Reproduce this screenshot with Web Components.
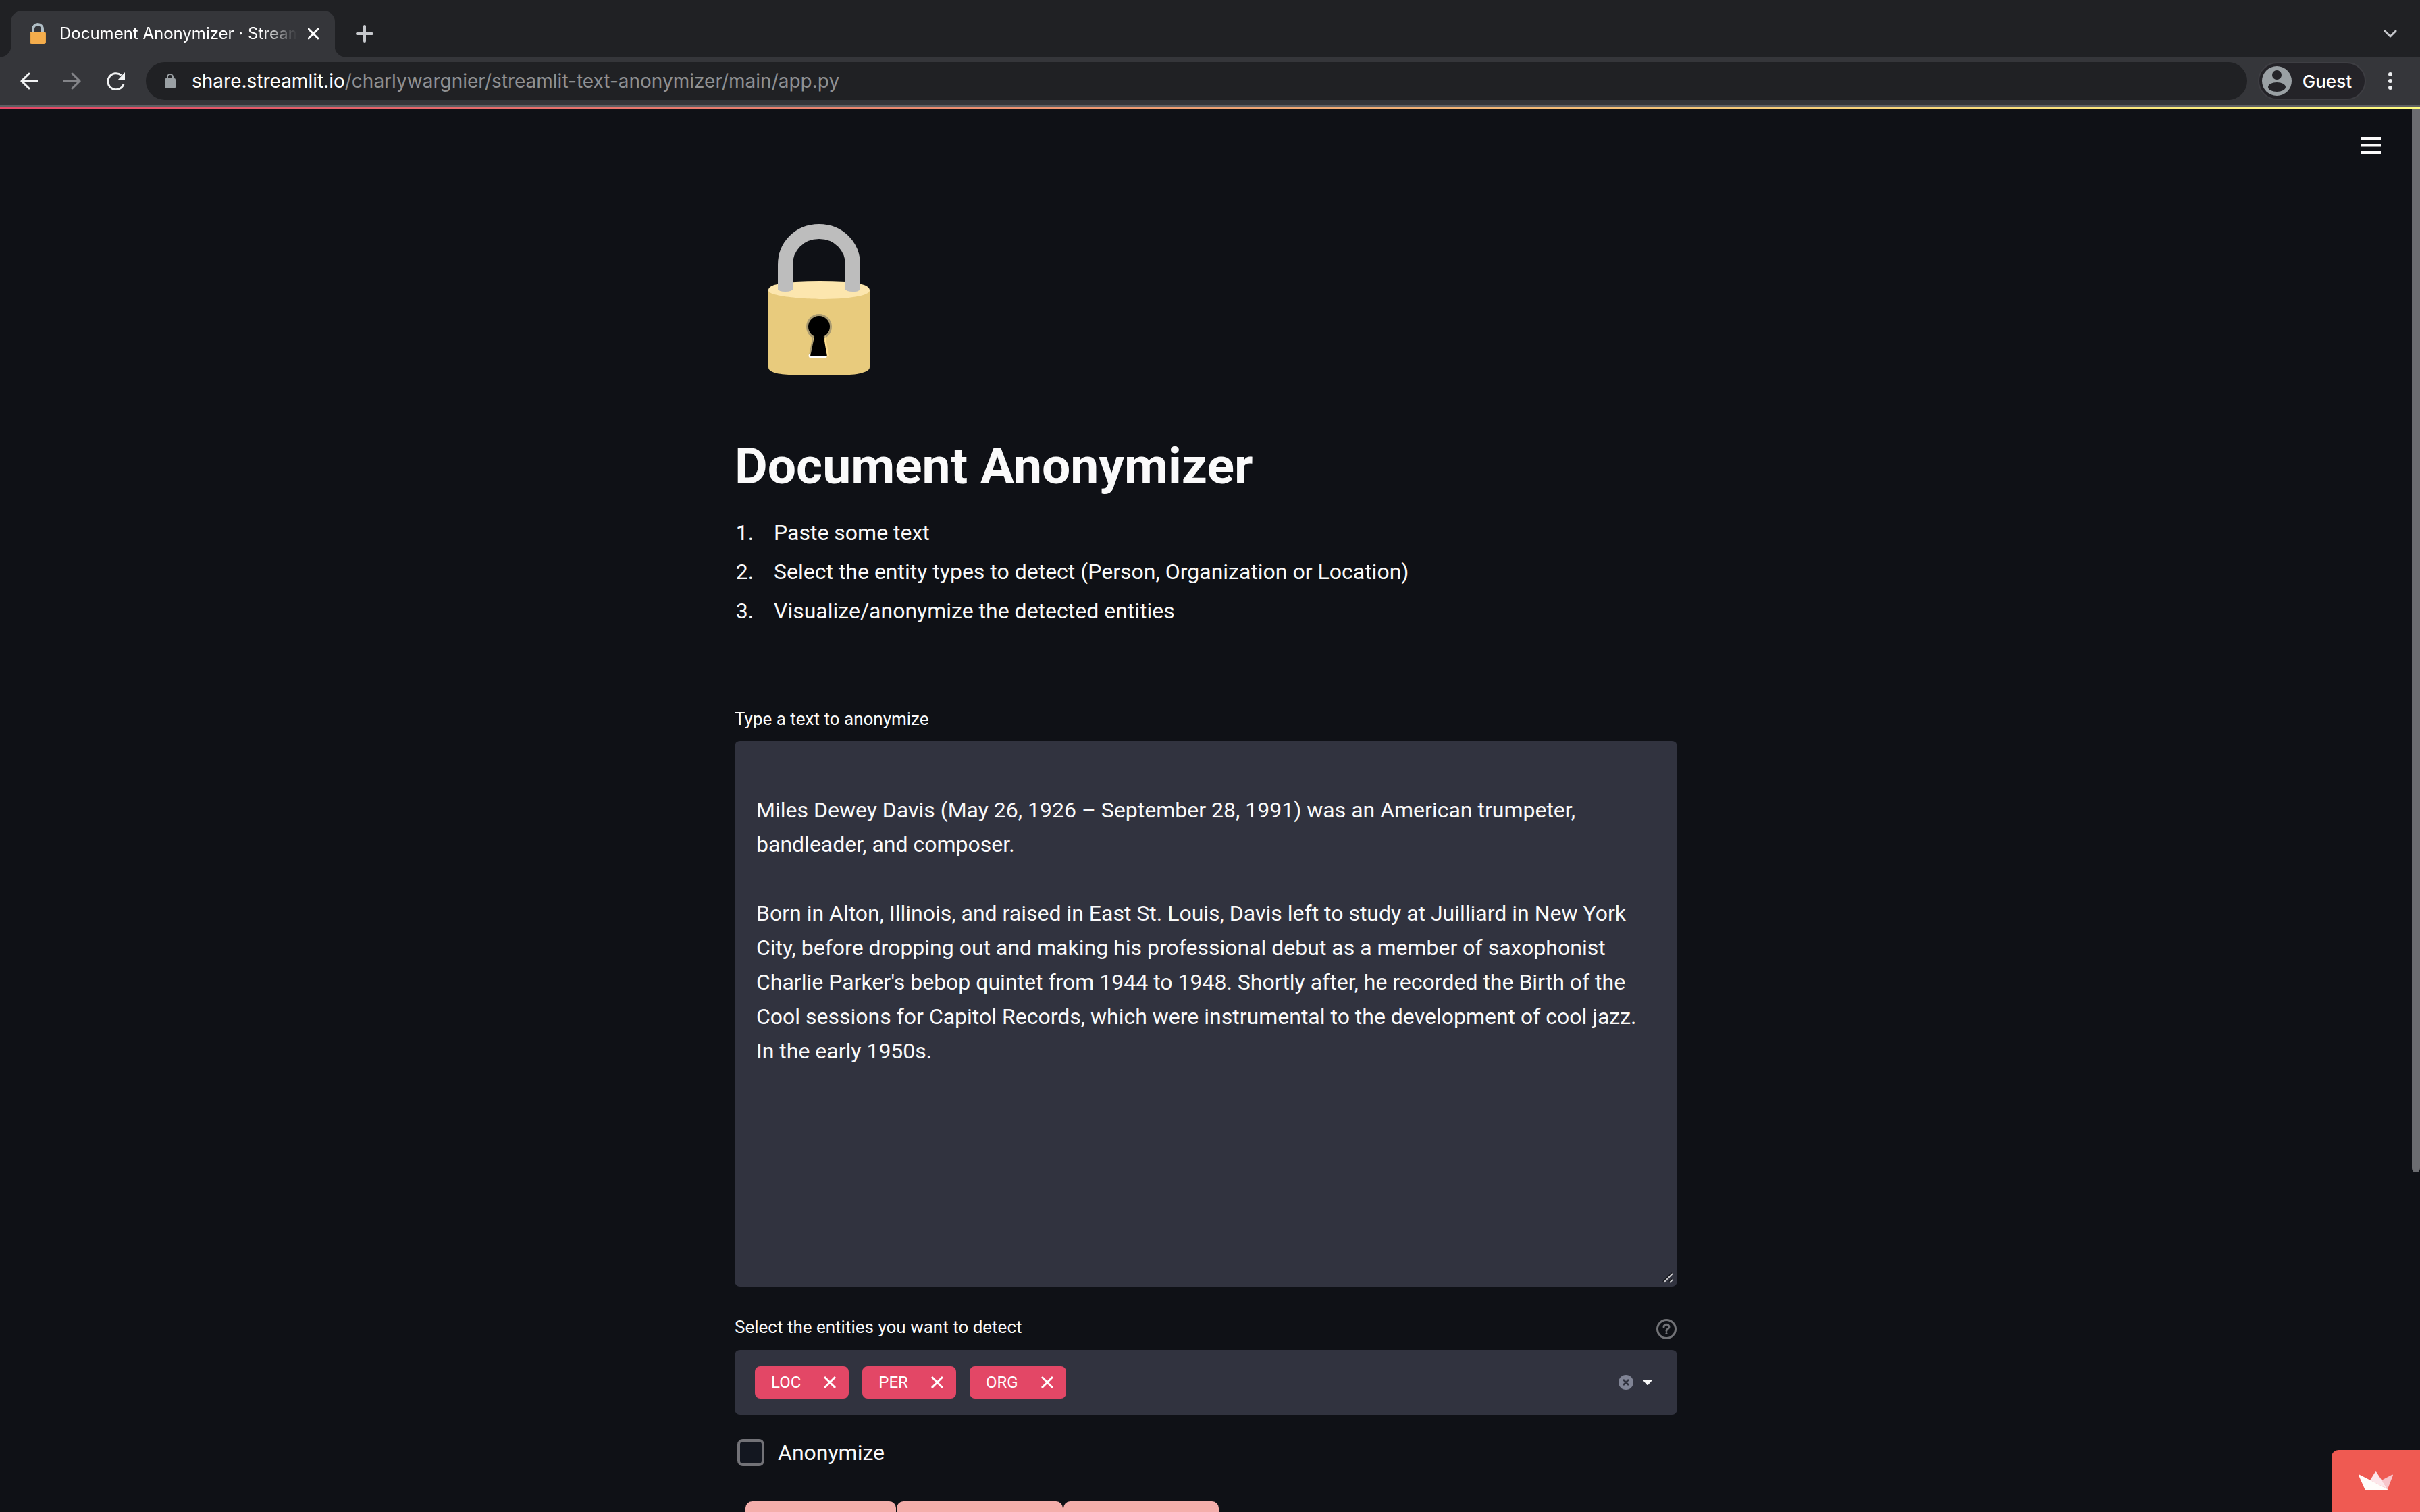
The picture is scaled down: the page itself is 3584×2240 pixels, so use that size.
<!DOCTYPE html>
<html lang="en">
<head>
<meta charset="utf-8">
<title>Document Anonymizer · Streamlit</title>
<style>
  html, body { margin: 0; height: 100%; overflow: hidden; background: #0f1116; }
</style>
</head>
<body>
<browser-window>
  <browser-tab slot="tabs">Document Anonymizer · Streamlit</browser-tab>
  <address-bar slot="address" domain="share.streamlit.io" path="/charlywargnier/streamlit-text-anonymizer/main/app.py"></address-bar>
  <streamlit-app>
    <lock-art></lock-art>
    <page-intro heading="Document Anonymizer">
      <li>Paste some text</li>
      <li>Select the entity types to detect (Person, Organization or Location)</li>
      <li>Visualize/anonymize the detected entities</li>
    </page-intro>
    <text-field label="Type a text to anonymize">
Miles Dewey Davis (May 26, 1926 – September 28, 1991) was an American trumpeter, bandleader, and composer.

Born in Alton, Illinois, and raised in East St. Louis, Davis left to study at Juilliard in New York City, before dropping out and making his professional debut as a member of saxophonist Charlie Parker's bebop quintet from 1944 to 1948. Shortly after, he recorded the Birth of the Cool sessions for Capitol Records, which were instrumental to the development of cool jazz. In the early 1950s.</text-field>
    <multi-select label="Select the entities you want to detect">
      <entity-tag>LOC</entity-tag>
      <entity-tag>PER</entity-tag>
      <entity-tag>ORG</entity-tag>
    </multi-select>
    <check-field label="Anonymize"></check-field>
    <result-strip></result-strip>
  </streamlit-app>
</browser-window>

<script>
const RESET = `
  * { box-sizing: border-box; }
  svg { display: block; flex: none; }
  button { margin: 0; padding: 0; border: 0; background: none; color: inherit; font: inherit; display: block; flex: none; }
`;

function define(name, render, ready) {
  customElements.define(name, class extends HTMLElement {
    connectedCallback() {
      if (this.shadowRoot) return;
      const root = this.attachShadow({ mode: "open" });
      const template = document.createElement("template");
      template.innerHTML = `<style>${RESET}</style>` + render(this);
      root.append(template.content.cloneNode(true));
      if (ready) ready(this, root);
    }
  });
}

define("browser-window", () => `
<style>
  :host { display: flex; flex-direction: column; height: 100vh; color: #fff; font-family: Inter, "Liberation Sans", sans-serif; background: #202124; }
  .tabs { display: flex; align-items: center; height: 84px; flex: none; padding: 16px 0 0 16px; }
  .new { margin-left: 31px; }
  .more { margin-left: auto; margin-right: 34px; }
  .bar { display: flex; align-items: center; height: 74px; flex: none; padding: 0 36px 0 29px; background: #35363a; border-bottom: 2px solid #5d5e62; }
  .nav { display: flex; gap: 36px; margin-right: 29px; }
  ::slotted(address-bar) { flex: 1; }
  .guest { display: flex; align-items: center; gap: 16px; height: 56px; margin: 0 28px 0 16px; padding: 0 19px 0 4px; border: 2px solid #3e3e43; border-radius: 28px; background: #242328; font-size: 26px; font-weight: 500; }
  .page { flex: 1; min-height: 0; display: flex; }
  ::slotted(streamlit-app) { flex: 1; }
</style>
<div class="tabs">
  <slot name="tabs"></slot>
  <button class="new" aria-label="New tab"><svg width="26" height="26" viewBox="0 0 26 26"><path d="M13 2v22M2 13h22" stroke="#c6c8cc" stroke-width="4" stroke-linecap="round"/></svg></button>
  <button class="more" aria-label="Search tabs"><svg width="20" height="14" viewBox="0 0 20 14"><path d="M2 3l8 8 8-8" fill="none" stroke="#c6c8cc" stroke-width="3" stroke-linecap="round" stroke-linejoin="round"/></svg></button>
</div>
<div class="bar">
  <div class="nav">
    <button aria-label="Back"><svg width="28" height="28" viewBox="0 0 28 28"><path d="M26 14H3M14 3L3 14l11 11" fill="none" stroke="#f2f3f4" stroke-width="3" stroke-linecap="round"/></svg></button>
    <button aria-label="Forward"><svg width="28" height="28" viewBox="0 0 28 28"><path d="M2 14h23M14 3l11 11-11 11" fill="none" stroke="#838488" stroke-width="3" stroke-linecap="round"/></svg></button>
    <button aria-label="Reload"><svg width="30" height="28" viewBox="0 0 30 28"><path d="M26 19A12 12 0 1 1 22.500 5.500" fill="none" stroke="#f2f3f4" stroke-width="3"/><path d="M28 1v12H17z" fill="#f2f3f4"/></svg></button>
  </div>
  <slot name="address"></slot>
  <button class="guest"><svg width="44" height="44" viewBox="0 0 44 44"><circle cx="22" cy="22" r="22" fill="#9aa0a4"/><circle cx="22" cy="13" r="7" fill="#242328"/><path d="M9 31c0-4 6-7 13-7s13 3 13 7-6 7-13 7-13-3-13-7z" fill="#242328"/></svg>Guest</button>
  <button aria-label="Menu"><svg width="16" height="28" viewBox="0 0 16 28" fill="#eceef0"><circle cx="8" cy="4" r="3"/><circle cx="8" cy="14" r="3"/><circle cx="8" cy="24" r="3"/></svg></button>
</div>
<div class="page"><slot></slot></div>`);

define("browser-tab", () => `
<style>
  :host { display: block; }
  .tab { position: relative; display: flex; align-items: center; width: 480px; height: 68px; padding: 0 24px 0 28px; background: #35363a; border-radius: 16px 16px 0 0; font-size: 24px; line-height: 32px; }
  .tab::before, .tab::after { content: ""; position: absolute; bottom: 0; width: 16px; height: 16px; }
  .tab::before { right: 100%; background: radial-gradient(circle at 0 0, transparent 16px, #35363a 17px); }
  .tab::after { left: 100%; background: radial-gradient(circle at 100% 0, transparent 16px, #35363a 17px); }
  .title { flex: 1; margin: 0 16px 0 20px; overflow: hidden; white-space: nowrap; -webkit-mask-image: linear-gradient(to right, #000 calc(100% - 52px), transparent); mask-image: linear-gradient(to right, #000 calc(100% - 52px), transparent); }
</style>
<div class="tab">
  <svg width="24" height="32" viewBox="0 0 24 32"><path d="M5 14V9a7 7 0 0 1 14 0v5" fill="none" stroke="#b0bec5" stroke-width="4"/><rect y="13" width="24" height="18" rx="3" fill="#f4ad4c"/><path d="M1 15v14M23 15v14" stroke="#dc9a3c" stroke-width="1"/></svg>
  <span class="title"><slot></slot></span>
  <button aria-label="Close tab"><svg width="16" height="18" viewBox="0 0 16 18"><path d="M1 2l14 14M15 2L1 16" stroke="#fff" stroke-width="3" stroke-linecap="round"/></svg></button>
</div>`);

define("address-bar", () => `
<style>
  :host { display: block; }
  .field { display: flex; align-items: center; gap: 24px; height: 56px; padding-left: 28px; border-radius: 28px; background: #202124; font-size: 28px; line-height: 36px; white-space: nowrap; color: #8f9092; }
  b { font-weight: 400; color: #fff; }
</style>
<div class="field" role="textbox" aria-label="Address"><svg width="16" height="22" viewBox="0 0 16 22"><path d="M4 9V5a4 4 0 0 1 8 0v4" fill="none" stroke="#9aa0a4" stroke-width="2"/><rect y="7" width="16" height="15" rx="2" fill="#9aa0a4"/></svg><span><b></b><span class="path"></span></span></div>`,
(host, root) => {
  root.querySelector("b").textContent = host.getAttribute("domain");
  root.querySelector(".path").textContent = host.getAttribute("path");
});

define("streamlit-app", () => `
<style>
  :host { position: relative; display: flex; flex-direction: column; min-width: 0; overflow: hidden; background: #0f1116; color: #fafafa; font-family: Roboto, "Liberation Sans", sans-serif; font-size: 32px; }
  .glow { height: 4px; flex: none; background: linear-gradient(to right, #e34766, #fffd80); }
  .view { flex: 1; min-height: 0; display: flex; }
  .content { flex: 1; min-width: 0; overflow: hidden; }
  header { display: flex; justify-content: flex-end; padding: 41px 46px 0 0; }
  main { display: flex; flex-direction: column; max-width: 1396px; margin: 0 auto; padding-top: 104px; }
  .scroll { width: 12px; flex: none; }
  .thumb { height: 75.8%; background: #6b6c70; border-radius: 0 0 6px 6px; }
  .badge { position: absolute; right: 0; bottom: 0; display: flex; padding: 32px 40px; border-radius: 10px 0 0 0; background: #ef5a52; }
</style>
<div class="glow"></div>
<div class="view">
  <div class="content">
    <header><button aria-label="Main menu"><svg width="29" height="25" viewBox="0 0 29 25"><path d="M0 2h29M0 12.500h29M0 23h29" stroke="#fafafa" stroke-width="4"/></svg></button></header>
    <main><slot></slot></main>
  </div>
  <div class="scroll"><div class="thumb"></div></div>
</div>
<a class="badge" href="#" aria-label="Hosted with Streamlit"><svg width="51" height="28" viewBox="0 0 51 28"><path d="M34 13L50 4.500q1 0 1 1L43 26z" fill="#f7c5cb"/><path d="M17 13L24.500 1q1-1.500 2 0L43 26z" fill="#fce6ea"/><path d="M0 5.500q0-1.500 1-1L43 26q0 1.500-1 1.500-16 1-31 0-1 0-2-2z" fill="#fffdfb"/></svg></a>`);

define("lock-art", () => `
<style>:host { display: block; padding-left: 50px; }</style>
<svg width="150" height="224" viewBox="0 0 150 224" role="img" aria-label="Lock">
  <path d="M0 98v114c0 7 12 10 30 11q45 2 90 0c18-1 30-5 30-11V98z" fill="#e8cb7d"/>
  <path d="M0 98C0 90 16 87 40 86q35-2 74 0c24 1 36 5 36 12 0 8-32 13-68 13C62 111 0 108 0 98z" fill="#fce6ae"/>
  <path d="M25 97V60C25 34 45 11 75 11s50 23 50 49v37" fill="none" stroke="#bdbdbd" stroke-width="22"/>
  <path d="M14 96h22q-1 4-11 4t-11-4zM114 96h22q-1 4-11 4t-11-4z" fill="#bdbdbd"/>
  <circle cx="75" cy="152" r="19" fill="#a99a70"/>
  <path d="M66 164l-6 31h8z" fill="#a99a70"/>
  <path d="M84 164l6 32h-6z" fill="#ffdf91"/>
  <path d="M61 195h26l-1 3H61q-3-3 0-6z" fill="#fff"/>
  <circle cx="75" cy="152" r="16"/>
  <path d="M69 162h12l6 34H62z"/>
</svg>`);

define("page-intro", () => `
<style>
  :host { display: block; }
  h1 { margin: 0; padding-top: 90px; font-size: 75px; line-height: 88px; font-weight: 700; }
  ol { margin: 30px 0 0; padding-left: 36px; }
  ::slotted(li) { line-height: 50px; margin-bottom: 8px; padding-left: 22px; }
</style>
<h1></h1><ol><slot></slot></ol>`,
(host, root) => { root.querySelector("h1").textContent = host.getAttribute("heading"); });

define("text-field", () => `
<style>
  :host { display: block; padding-top: 107px; }
  label { display: block; font-size: 26px; line-height: 40px; margin-bottom: 13px; }
  textarea { display: block; width: 100%; height: 808px; padding: 26px 32px; border: 0; border-radius: 8px; outline: 0; resize: none; background: #31333f; color: #fafafa; font: 32px/51px Roboto, "Liberation Sans", sans-serif; }
  .box { display: grid; }
  .box > * { grid-area: 1 / 1; }
  svg { align-self: end; justify-self: end; margin: 4px; pointer-events: none; }
</style>
<label for="text"></label>
<div class="box"><textarea id="text"></textarea>
<svg width="18" height="18" viewBox="0 0 18 18"><path d="M1 15L14 2M10 15l4-4" stroke="#0f1116" stroke-width="2"/><path d="M2 16L15 3M11 16l4-4" stroke="#c9c9cb" stroke-width="2"/></svg></div>`,
(host, root) => {
  root.querySelector("label").textContent = host.getAttribute("label");
  root.querySelector("textarea").value = host.textContent;
});

define("multi-select", () => `
<style>
  :host { display: block; padding-top: 38px; }
  .top { display: flex; justify-content: space-between; height: 56px; }
  .label { font-size: 26px; line-height: 44px; }
  .top button { align-self: flex-start; margin: 9px 0 0; }
  .box { display: flex; align-items: center; height: 96px; padding: 0 36px 0 30px; border-radius: 8px; background: #31333f; }
  .tags { flex: 1; display: flex; gap: 20px; }
  .clear { margin-right: 13px; }
</style>
<div class="top"><span class="label" id="label"></span>
<button aria-label="Help"><svg width="32" height="32" viewBox="0 0 32 32" fill="none" stroke="#727377" stroke-width="3" stroke-linecap="round"><circle cx="16" cy="16" r="13.500"/><path d="M12 13c0-5 8-5 8 0 0 3-4 3-4 5.500"/><path d="M16 22.500v.1"/></svg></button></div>
<div class="box" role="group" aria-labelledby="label">
  <div class="tags"><slot></slot></div>
  <button class="clear" aria-label="Clear all"><svg width="22" height="22" viewBox="0 0 22 22"><circle cx="11" cy="11" r="11" fill="#808495"/><path d="M7 7l8 8M15 7l-8 8" stroke="#31333f" stroke-width="2.500"/></svg></button>
  <button aria-label="Open"><svg width="16" height="10" viewBox="0 0 16 10"><path d="M1 2h14L9 8.500q-1 1-2 0z" fill="#fafafa"/></svg></button>
</div>`,
(host, root) => { root.querySelector(".label").textContent = host.getAttribute("label"); });

define("entity-tag", () => `
<style>
  :host { display: flex; align-items: center; gap: 33px; height: 48px; padding: 0 18px 0 24px; border-radius: 8px; background: #e34766; color: #fff; font-size: 24px; line-height: 32px; }
</style>
<span><slot></slot></span><button aria-label="Remove"><svg width="20" height="20" viewBox="0 0 20 20"><path d="M2 2l16 16M18 2L2 18" stroke="#fff" stroke-width="3"/></svg></button>`);

define("check-field", () => `
<style>
  :host { display: block; padding: 32px 0 0 4px; }
  label { display: flex; align-items: center; gap: 20px; line-height: 48px; }
  input { appearance: none; width: 40px; height: 40px; margin: 0; border: 4px solid #727277; border-radius: 8px; background: #131720; }
</style>
<label><input type="checkbox"><span></span></label>`,
(host, root) => { root.querySelector("span").textContent = host.getAttribute("label"); });

define("result-strip", () => `
<style>
  :host { display: flex; gap: 1px; padding: 48px 0 0 16px; }
  div { height: 60px; border-radius: 10px; background: #f4aeab; }
  .a { width: 223px; } .b { width: 246px; } .c { width: 230px; }
</style>
<div class="a"></div><div class="b"></div><div class="c"></div>`);
</script>
</body>
</html>
